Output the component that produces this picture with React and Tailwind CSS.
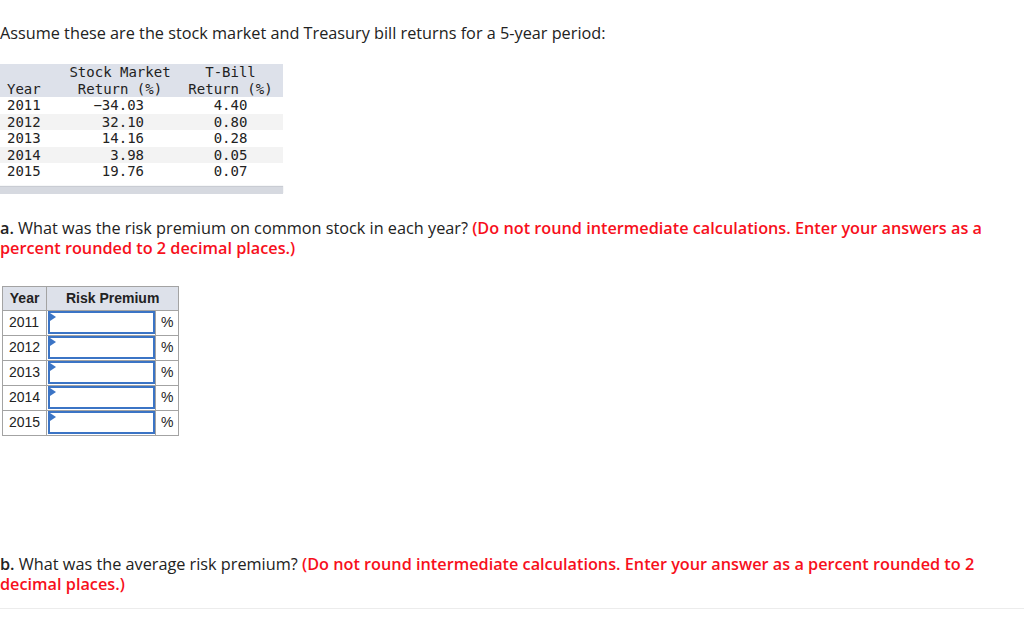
const returns = [
  { year: 2011, stock: "\u221234.03", bill: "4.40" },
  { year: 2012, stock: "32.10", bill: "0.80" },
  { year: 2013, stock: "14.16", bill: "0.28" },
  { year: 2014, stock: "3.98", bill: "0.05" },
  { year: 2015, stock: "19.76", bill: "0.07" },
];

function AnswerRow({ year }) {
  return (
    <tr className="h-[25px]">
      <td className="border border-[#a3a3a3] px-[6px] text-[14px] text-[#222]">{year}</td>
      <td className="border border-[#a3a3a3] p-0 pl-px">
        <div className="relative h-[23px] w-[107px] border-2 border-[#3b74c5]">
          <span className="absolute left-0 top-0 h-0 w-0 border-y-[4px] border-l-[6px] border-y-transparent border-l-[#3b74c5]" />
        </div>
      </td>
      <td className="w-[23px] border border-[#a3a3a3] text-center text-[14px] text-[#222]">%</td>
    </tr>
  );
}

export default function App() {
  return (
    <div className="min-h-[618px] bg-white font-['Open_Sans',sans-serif] text-[#222]">
      <p className="pt-[23px] text-[16.25px] leading-[20px]">
        Assume these are the stock market and Treasury bill returns for a 5-year period:
      </p>

      {/* returns table */}
      <div className="mt-[21px] w-[283px] font-['DejaVu_Sans_Mono',monospace] text-[14px] leading-[16.5px] text-[#222]">
        <div className="flex bg-[#dde1ea]">
          <div className="flex w-[62px] items-end pl-[7px]">Year</div>
          <div className="w-[116px] text-center">
            <div>Stock Market</div>
            <div>Return (%)</div>
          </div>
          <div className="w-[105px] text-center">
            <div>T-Bill</div>
            <div>Return (%)</div>
          </div>
        </div>
        {returns.map((r, i) => (
          <div key={r.year} className={i % 2 ? "flex bg-[#f3f3f3]" : "flex"}>
            <div className="w-[62px] pl-[7px]">{r.year}</div>
            <div className="w-[116px] pr-[34px] text-right">{r.stock}</div>
            <div className="w-[105px] text-center">{r.bill}</div>
          </div>
        ))}
        <div className="mt-[7px] h-[7px] bg-[#d6d9e0] shadow-[0_-1px_1px_#c9ccd3]" />
      </div>

      <p className="mt-[24px] pr-[20px] text-[16.25px] leading-[20px]">
        <b className="font-semibold">a.</b> What was the risk premium on common stock in each year?{" "}
        <b className="font-semibold text-[#f7101c]">
          (Do not round intermediate calculations. Enter your answers as a percent rounded to 2 decimal places.)
        </b>
      </p>

      <table className="ml-[2px] mt-[28px] border-collapse font-['Liberation_Sans',Arial,sans-serif]">
        <thead>
          <tr className="h-[24px] bg-[#dde1ea] text-[14px] font-bold text-[#222]">
            <th className="border border-[#a3a3a3] px-[6px]">Year</th>
            <th colSpan={2} className="border border-[#a3a3a3]">Risk Premium</th>
          </tr>
        </thead>
        <tbody>
          {returns.map((r) => (
            <AnswerRow key={r.year} year={r.year} />
          ))}
        </tbody>
      </table>

      <p className="mt-[118px] pr-[20px] text-[16.25px] leading-[20px]">
        <b className="font-semibold">b.</b> What was the average risk premium?{" "}
        <b className="font-semibold text-[#f7101c]">
          (Do not round intermediate calculations. Enter your answer as a percent rounded to 2 decimal places.)
        </b>
      </p>

      <div className="mt-[14px] border-t border-[#ececec]" />
    </div>
  );
}
